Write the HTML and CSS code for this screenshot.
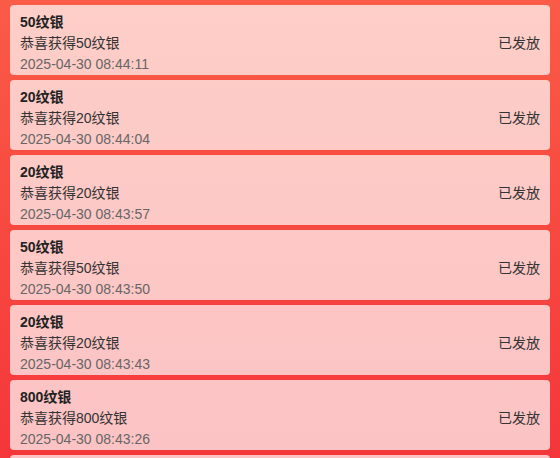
FILE: index.html
```html
<!DOCTYPE html>
<html>
<head>
<meta charset="utf-8">
<link rel="stylesheet" href="styles.css">
</head>
<body>
<div class="list">
  <div class="card"><div class="info"><div class="title">50纹银</div><div class="desc">恭喜获得50纹银</div><div class="time">2025-04-30 08:44:11</div></div><div class="status">已发放</div></div>
  <div class="card"><div class="info"><div class="title">20纹银</div><div class="desc">恭喜获得20纹银</div><div class="time">2025-04-30 08:44:04</div></div><div class="status">已发放</div></div>
  <div class="card"><div class="info"><div class="title">20纹银</div><div class="desc">恭喜获得20纹银</div><div class="time">2025-04-30 08:43:57</div></div><div class="status">已发放</div></div>
  <div class="card"><div class="info"><div class="title">50纹银</div><div class="desc">恭喜获得50纹银</div><div class="time">2025-04-30 08:43:50</div></div><div class="status">已发放</div></div>
  <div class="card"><div class="info"><div class="title">20纹银</div><div class="desc">恭喜获得20纹银</div><div class="time">2025-04-30 08:43:43</div></div><div class="status">已发放</div></div>
  <div class="card"><div class="info"><div class="title">800纹银</div><div class="desc">恭喜获得800纹银</div><div class="time">2025-04-30 08:43:26</div></div><div class="status">已发放</div></div>
  <div class="card"></div>
</div>
</body>
</html>
```
FILE: styles.css
```css
html, body {
  margin: 0;
  padding: 0;
  height: 458px;
  overflow: hidden;
}
body {
  background: linear-gradient(180deg, #fa5b46 0%, #f5363a 100%);
  font-family: "Liberation Sans", Arial, "Noto Sans CJK SC", sans-serif;
  font-size: 14px;
  color: #333;
}
.list {
  display: flex;
  flex-direction: column;
  gap: 5.2px;
  padding: 5.4px 10px 0 10px;
}
.card {
  display: flex;
  align-items: center;
  justify-content: space-between;
  height: 69.8px;
  box-sizing: border-box;
  padding: 4px 10px 0 10px;
  background: rgba(255, 255, 255, 0.7);
  border-radius: 4px;
  flex-shrink: 0;
}
.info {
  display: flex;
  flex-direction: column;
  line-height: 21px;
  padding-top: 2px;
}
.title {
  font-weight: bold;
  color: #222;
}
.desc {
  color: #333;
}
.time {
  color: #666;
}
.status {
  color: #333;
}
```
